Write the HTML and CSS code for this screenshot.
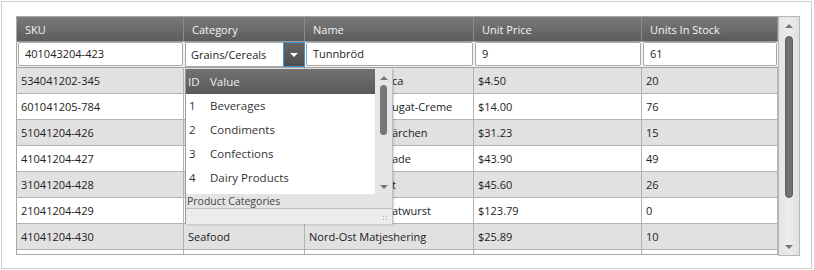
FILE: index.html
```html
<!DOCTYPE html>
<html lang="en">
<head>
    <meta charset="UTF-8">
    <title>Products Grid</title>
    <link rel="stylesheet" href="styles.css">
</head>
<body>
    <div class="frame">
        <div class="grid">
            <div class="table">
                <div class="row head">
                    <div class="cell">SKU</div>
                    <div class="cell">Category</div>
                    <div class="cell">Name</div>
                    <div class="cell">Unit Price</div>
                    <div class="cell">Units In Stock</div>
                </div>
                <div class="row edit">
                    <div class="cell"><div class="input">401043204-423</div></div>
                    <div class="cell combo-cell">
                        <div class="combo">
                            <span class="combo-text">Grains/Cereals</span>
                            <span class="combo-btn"><span class="tri-down"></span></span>
                        </div>
                    </div>
                    <div class="cell"><div class="input">Tunnbröd</div></div>
                    <div class="cell"><div class="input">9</div></div>
                    <div class="cell"><div class="input">61</div></div>
                </div>
                <div class="row alt">
                    <div class="cell">534041202-345</div>
                    <div class="cell"></div>
                    <div class="cell under"><span>ca</span></div>
                    <div class="cell">$4.50</div>
                    <div class="cell">20</div>
                </div>
                <div class="row">
                    <div class="cell">601041205-784</div>
                    <div class="cell"></div>
                    <div class="cell under"><span>ugat-Creme</span></div>
                    <div class="cell">$14.00</div>
                    <div class="cell">76</div>
                </div>
                <div class="row alt">
                    <div class="cell">51041204-426</div>
                    <div class="cell"></div>
                    <div class="cell under"><span>ärchen</span></div>
                    <div class="cell">$31.23</div>
                    <div class="cell">15</div>
                </div>
                <div class="row">
                    <div class="cell">41041204-427</div>
                    <div class="cell"></div>
                    <div class="cell under"><span>ade</span></div>
                    <div class="cell">$43.90</div>
                    <div class="cell">49</div>
                </div>
                <div class="row alt">
                    <div class="cell">31041204-428</div>
                    <div class="cell"></div>
                    <div class="cell under"><span>t</span></div>
                    <div class="cell">$45.60</div>
                    <div class="cell">26</div>
                </div>
                <div class="row">
                    <div class="cell">21041204-429</div>
                    <div class="cell"></div>
                    <div class="cell under"><span>atwurst</span></div>
                    <div class="cell">$123.79</div>
                    <div class="cell">0</div>
                </div>
                <div class="row alt">
                    <div class="cell">41041204-430</div>
                    <div class="cell">Seafood</div>
                    <div class="cell">Nord-Ost Matjeshering</div>
                    <div class="cell">$25.89</div>
                    <div class="cell">10</div>
                </div>
                <div class="row">
                    <div class="cell"></div>
                    <div class="cell"></div>
                    <div class="cell"></div>
                    <div class="cell"></div>
                    <div class="cell"></div>
                </div>

                <!-- category picker popup -->
                <div class="popup">
                    <div class="popup-body">
                        <div class="popup-list">
                            <div class="popup-head"><span class="pid">ID</span>Value</div>
                            <div class="popup-item"><span class="pid">1</span>Beverages</div>
                            <div class="popup-item"><span class="pid">2</span>Condiments</div>
                            <div class="popup-item"><span class="pid">3</span>Confections</div>
                            <div class="popup-item"><span class="pid">4</span>Dairy Products</div>
                        </div>
                        <div class="mini-scroll">
                            <span class="tri-up"></span>
                            <div class="mini-track"><div class="mini-thumb"></div></div>
                            <span class="tri-down gray"></span>
                        </div>
                    </div>
                    <div class="popup-foot">Product Categories</div>
                    <div class="popup-grip"><span class="grip"></span></div>
                </div>
            </div>
            <div class="vscroll">
                <span class="tri-up"></span>
                <div class="track"><div class="thumb"></div></div>
                <span class="tri-down gray"></span>
            </div>
        </div>
    </div>
</body>
</html>
```

FILE: styles.css
```css
body {
    margin: 0;
    background: #fff;
    font-family: 'Open Sans', 'Noto Sans', sans-serif;
    font-size: 11px;
    color: #222;
}

.frame {
    margin: 1px 2px 0 1px;
    height: 268px;
    border: 1px solid #cfcfcf;
    box-sizing: border-box;
    padding: 14px 0 0 14px;
}

.grid {
    display: flex;
    height: 239px;
}

.table {
    position: relative;
    width: 762px;
    height: 239px;
    overflow: hidden;
    border-left: 1px solid #a8a8a8;
    border-top: 1px solid #a8a8a8;
    border-bottom: 1px solid #a8a8a8;
    box-sizing: border-box;
}

.row {
    display: grid;
    grid-template-columns: 167px 121px 169px 168px 136px;
    height: 26px;
    border-bottom: 1px solid #b3b3b3;
    box-sizing: border-box;
    background: #fff;
}

.row.alt {
    background: #e1e1e1;
}

.cell {
    border-right: 1px solid #b3b3b3;
    padding-left: 4px;
    line-height: 25px;
    white-space: nowrap;
    overflow: hidden;
}

/* name text that runs out from under the popup */
.cell.under {
    padding-left: 87px;
}

.row.head {
    height: 25px;
    background: linear-gradient(#7a7a7a, #5c5c5c);
    border-bottom: 1px solid #9a9a9a;
    color: #f4f4f4;
}

.row.head .cell {
    padding-left: 8px;
    border-right: 1px solid #8c8c8c;
    line-height: 26px;
}

.row.edit {
    background: #f2f2f2;
    border-bottom: 1px solid #a0a0a0;
}

.row.edit .cell {
    padding: 0;
    border-right: none;
}

.input {
    height: 24px;
    margin: 0 1px 0 1px;
    border: 1px solid #a8a8a8;
    border-radius: 2px;
    background: #fff;
    padding-left: 6px;
    line-height: 22px;
    box-sizing: border-box;
}

.combo {
    display: flex;
    height: 25px;
    margin: 0 0 0 1px;
    border: 1px solid #a8a8a8;
    border-right: none;
    background: #fff;
    box-sizing: border-box;
}

.combo-text {
    flex: 1;
    padding-left: 5px;
    line-height: 24px;
}

.combo-btn {
    width: 22px;
    background: linear-gradient(#666, #4e4e4e);
    border: 1px solid #3d9bd9;
    box-sizing: border-box;
    display: flex;
    align-items: center;
    justify-content: center;
    margin-top: -1px;
    height: 25px;
}

.tri-down {
    width: 0;
    height: 0;
    border-left: 4px solid transparent;
    border-right: 4px solid transparent;
    border-top: 4px solid #fff;
}

.tri-down.gray {
    border-top-color: #777;
}

.tri-up {
    width: 0;
    height: 0;
    border-left: 4px solid transparent;
    border-right: 4px solid transparent;
    border-bottom: 4px solid #777;
}

/* outer vertical scrollbar */
.vscroll {
    width: 22px;
    height: 240px;
    background: linear-gradient(90deg, #e4e4e4, #ececec 50%, #e0e0e0);
    border: 1px solid #b8b8b8;
    box-sizing: border-box;
    display: flex;
    flex-direction: column;
    align-items: center;
    padding: 7px 0 6px;
}

.track {
    flex: 1;
    width: 8px;
    padding: 8px 0 8px;
}

.thumb {
    height: 162px;
    background: #707070;
    border-radius: 4px;
    border: 1px solid #5e5e5e;
    box-sizing: border-box;
}

/* popup */
.popup {
    position: absolute;
    left: 168px;
    top: 52px;
    width: 208px;
    height: 155px;
    background: #ececec;
    border-left: 1px solid #9a9a9a;
    border-right: 1px solid #bdbdbd;
    box-sizing: border-box;
    box-shadow: 1px 1px 2px rgba(0, 0, 0, 0.15);
    display: flex;
    flex-direction: column;
    font-size: 11.5px;
    z-index: 2;
}

.popup-body {
    display: flex;
    height: 125px;
    background: #fff;
}

.popup-list {
    flex: 1;
}

.popup-head {
    height: 25px;
    line-height: 25px;
    background: linear-gradient(#727272, #585858);
    color: #f2f2f2;
    padding-left: 2px;
}

.popup-item {
    height: 24px;
    line-height: 24px;
    padding-left: 3px;
    color: #333;
}

.pid {
    display: inline-block;
    width: 22px;
}

.popup-item .pid {
    width: 21px;
}

.mini-scroll {
    width: 17px;
    background: #e6e6e6;
    display: flex;
    flex-direction: column;
    align-items: center;
    padding: 7px 0 5px;
    box-sizing: border-box;
}

.mini-track {
    flex: 1;
    width: 7px;
    padding: 5px 0;
}

.mini-thumb {
    height: 50px;
    background: #777;
    border-radius: 4px;
}

.popup-foot {
    height: 14px;
    line-height: 14px;
    padding-left: 1px;
    background: #e4e4e4;
    border-bottom: 1px solid #bcbcbc;
    color: #444;
    font-size: 10.5px;
}

.popup-grip {
    flex: 1;
    position: relative;
    background: #ececec;
}

.grip {
    position: absolute;
    right: 4px;
    bottom: 3px;
    width: 6px;
    height: 6px;
    background:
        radial-gradient(circle, #aaa 0.8px, transparent 1px) 0 0 / 3px 3px;
}
```
